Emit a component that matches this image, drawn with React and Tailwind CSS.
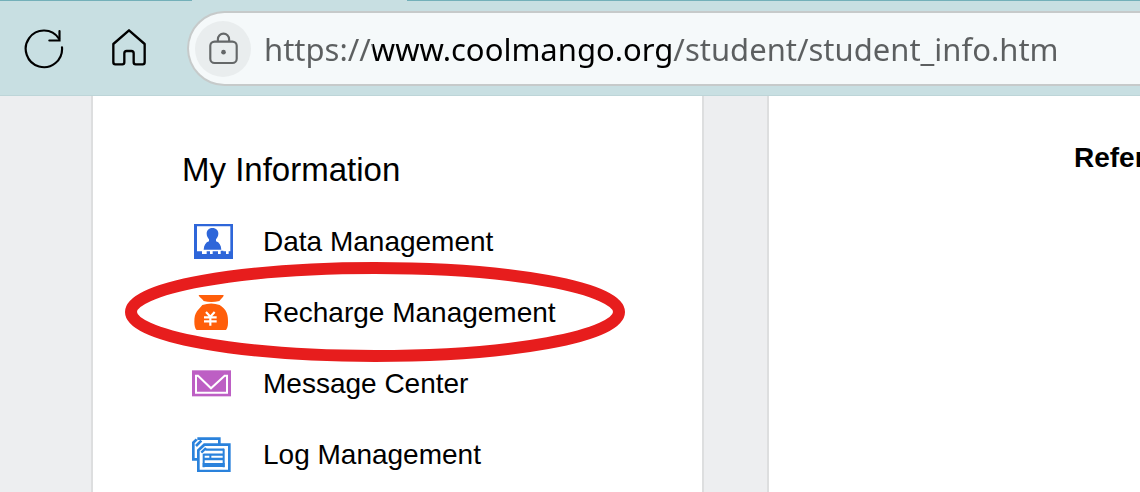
import React from 'react';

function ReloadIcon() {
  return (
    <svg viewBox="72 87 120 120" className="w-10 h-10" fill="none" stroke="#000" strokeWidth="6.5" strokeLinecap="round">
      <path d="M186 142 A54.5 55 0 1 1 177 116" />
      <path d="M178.500 93 V121.500 H148" strokeLinejoin="miter" />
    </svg>
  );
}

function HomeIcon() {
  return (
    <svg viewBox="327 87 120 120" className="w-10 h-10" fill="none" stroke="#000" strokeWidth="7" strokeLinejoin="round">
      <path d="M387 91 L340 132 V187 Q340 193 346 193 H367 Q373 193 373 187 V160 Q373 153 380 153 H394 Q401 153 401 160 V187 Q401 193 407 193 H428 Q434 193 434 187 V132 Z" />
    </svg>
  );
}

function LockIcon() {
  return (
    <svg viewBox="621 92 100 100" className="w-[33px] h-[33px]" fill="none" stroke="#646768" strokeWidth="6.5">
      <rect x="631" y="121" width="80" height="65" rx="13" />
      <path d="M654 121 V114 A17 17 0 0 1 688 114 V121" />
      <circle cx="671" cy="153" r="7" fill="#646768" stroke="none" />
    </svg>
  );
}

function DataIcon() {
  return (
    <svg viewBox="36 42 123 105" className="w-[41px] h-[35px]">
      <rect x="42" y="42" width="117" height="105" fill="#2e66d9" />
      <path
        d="M51 49 H151 V124 H146 V132 H138 V124 H130 V122 H122 V132 H114 V124 H98 V132 H90 V124 H80 V132 H66 V124 H51 Z"
        fill="#fff"
      />
      <path d="M97 54 C109 54 115 62 115 71 C115 79 111 84 108 88 V94 C118 97 123 106 124 119 H71 C72 106 77 97 87 94 V88 C84 84 80 79 80 71 C80 62 86 54 97 54 Z" fill="#2e66d9" />
    </svg>
  );
}

function RechargeIcon() {
  return (
    <svg viewBox="36 27 123 105" className="w-[41px] h-[35px]">
      <path d="M56 27 H131 C131 33 124 37 118 45 Q94 51 71 45 C66 37 57 34 56 27 Z" fill="#ff5e0a" />
      <path
        d="M67 57 Q94 48 119 57 C127 63 136 70 140 80 C144 90 144 100 144 110 C144 121 141 127 138 132 H50 C45 127 43 119 43 107 C43 94 45 84 51 76 C57 68 62 64 67 57 Z"
        fill="#ff5e0a"
      />
      <path d="M78 78 L91 92 L104 78 M72 94 H110 M72 106 H110 M91 92 V119" fill="none" stroke="#fff" strokeWidth="6.5" />
    </svg>
  );
}

function MessageIcon() {
  return (
    <svg viewBox="36 17 123 105" className="w-[41px] h-[35px]">
      <rect x="36" y="30" width="117" height="78" fill="#bd5fc4" />
      <path d="M54 46 L93 84 L134 46" fill="none" stroke="#fff" strokeWidth="6" />
      <path d="M56 46 H48 V97 H141 V46 H132" fill="none" stroke="#fff" strokeWidth="6" />
    </svg>
  );
}

function LogIcon() {
  return (
    <svg viewBox="36 33 123 105" className="w-[41px] h-[35px]" fill="none" stroke="#2a82dc">
      <path d="M52 38 H118 V56 M50 40 L40 50 V100 H54" strokeWidth="8" />
      <path d="M48 60 L64 44" strokeWidth="8" />
      <path d="M73 56 H148 V135 H55 V73 Z" fill="#fff" strokeWidth="8" />
      <path d="M64 80 L78 66" strokeWidth="7" />
      <path d="M76 71 H132 M70 86 H132 M70 99 H132" strokeWidth="7" />
      <path d="M71 84 V124 M131 68 V124 M91 84 V99" strokeWidth="6" />
      <path d="M68 117 H134" strokeWidth="12" />
    </svg>
  );
}

const menuItems = [
  { label: 'Data Management', Icon: DataIcon },
  { label: 'Recharge Management', Icon: RechargeIcon, highlighted: true },
  { label: 'Message Center', Icon: MessageIcon },
  { label: 'Log Management', Icon: LogIcon },
];

function BrowserBar() {
  return (
    <header className="bg-[#c8dfe2] border-b border-[#bdd5d8]">
      {/* bottom edge of the tab strip, open under the active tab */}
      <div className="flex h-px">
        <div className="w-[192px] bg-[#74b0b9]" />
        <div className="w-[215px]" />
        <div className="flex-1 bg-[#74b0b9]" />
      </div>
      <div className="flex items-center pt-[10px] pb-[9px] pl-6 overflow-hidden">
        <button type="button" aria-label="Reload" className="shrink-0">
          <ReloadIcon />
        </button>
        <button type="button" aria-label="Home" className="shrink-0 ml-[45px]">
          <HomeIcon />
        </button>
        <div className="flex flex-1 items-center h-[75px] ml-[38px] pl-[6px] bg-[#f5f9fa] border-2 border-r-0 border-[#c6caca] rounded-l-full">
          <button
            type="button"
            aria-label="Site information"
            className="flex shrink-0 items-center justify-center w-14 h-14 rounded-full bg-[#e9edee]"
          >
            <LockIcon />
          </button>
          {/* the host part of the address is darker than the rest */}
          <input
            type="text"
            aria-label="Address"
            defaultValue="https://www.coolmango.org/student/student_info.htm"
            className="flex-1 min-w-0 ml-[13px] h-12 font-['Noto_Sans','Open_Sans',sans-serif] text-[31px] outline-none text-transparent caret-black bg-clip-text bg-[linear-gradient(90deg,#5c5f60_109px,#000_109px,#000_409px,#5c5f60_409px)]"
          />
        </div>
      </div>
    </header>
  );
}

function MenuItem({ label, Icon, highlighted }) {
  return (
    <li className="relative">
      <a href="#" className="flex items-center gap-[30px] py-[18px]">
        <Icon />
        <span className="text-[28px] leading-[35px] whitespace-nowrap">{label}</span>
      </a>
      {highlighted && (
        <svg
          viewBox="0 0 500 100"
          className="absolute -left-[67px] -top-[15px] w-[500px] h-[100px] pointer-events-none"
          fill="none"
          stroke="#e71d1d"
          strokeWidth="12"
        >
          <ellipse cx="250" cy="50" rx="244" ry="44" />
        </svg>
      )}
    </li>
  );
}

export default function App() {
  return (
    <div className="flex flex-col min-h-screen bg-[#edeef0] text-black font-['Liberation_Sans',Arial,sans-serif]">
      <BrowserBar />
      <div className="flex flex-1 pl-[91px] gap-[63px] overflow-hidden">
        <nav className="w-[613px] shrink-0 bg-white border-x-2 border-[#dddedf] pl-[99px] pt-[54px]">
          <h2 className="-ml-[10px] text-[33px] leading-10">My Information</h2>
          <ul className="mt-4">
            {menuItems.map((item) => (
              <MenuItem key={item.label} {...item} />
            ))}
          </ul>
        </nav>
        <main className="flex-1 min-w-0 bg-white border-l-2 border-[#dddedf] pl-[305px] pt-[44px] overflow-hidden">
          <h3 className="text-[28px] leading-[35px] font-bold whitespace-nowrap">Refer</h3>
        </main>
      </div>
    </div>
  );
}
